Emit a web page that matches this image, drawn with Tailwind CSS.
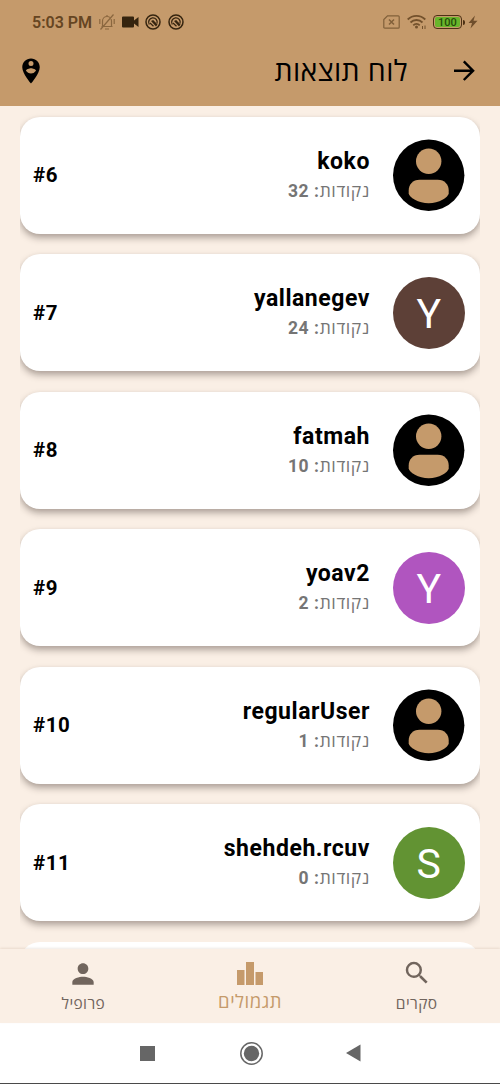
<!DOCTYPE html>
<html lang="he" dir="rtl">
<head>
<meta charset="utf-8">
<title>לוח תוצאות</title>
<script src="https://cdn.jsdelivr.net/npm/@tailwindcss/browser@4"></script>
</head>
<body class="w-[500px] h-[1084px] overflow-hidden flex flex-col bg-[#faefe5] font-['Roboto','Open_Sans',sans-serif] text-black">
  <header class="h-[106px] shrink-0 bg-[#c59a6b] flex flex-col">
    <div dir="ltr" class="h-[44px] pl-8 pr-[22px] flex items-center justify-between text-[#654522]">
      <div class="flex items-center">
        <span class="text-[16px] leading-none font-semibold w-[66px] pt-px whitespace-nowrap">5:03 PM</span>
        <svg class="w-[18px] h-[18px]" viewBox="0 0 18 18" fill="none" stroke="#8a673f" stroke-width="1.2"><path d="M3.5 13.5h11M4.500 13V8a4.500 4.500 0 0 1 9 0v5M7 16h4M9 2v1.500M1.800 6v5M16.200 6v5M2.500 16.500 15.500 1.500"/></svg>
        <svg class="ml-[6px] w-[17px] h-[12px]" viewBox="0 0 17 12" fill="#35240f"><path d="M0 1.500Q0 .5 1 .5H11Q12 .5 12 1.500V4.500L16.500 1V11L12 7.500V10.500Q12 11.500 11 11.500H1Q0 11.500 0 10.500Z"/></svg>
        <svg class="ml-[6px] w-[16px] h-[16px]" viewBox="0 0 16 16" fill="none" stroke="#35240f"><circle cx="8" cy="8" r="7" stroke-width="1.500"/><path d="M4.300 10.500A4.300 4.300 0 1 1 12 9.500" stroke-width="1.300"/><path d="M6 7 8.200 6 12.500 10.500 11 12.500Z" fill="#35240f" stroke="none"/><path d="M5 9 8.500 12.300" stroke-width="1.200"/></svg>
        <svg class="ml-[7px] w-[16px] h-[16px]" viewBox="0 0 16 16" fill="none" stroke="#35240f"><circle cx="8" cy="8" r="7" stroke-width="1.500"/><path d="M4.300 10.500A4.300 4.300 0 1 1 12 9.500" stroke-width="1.300"/><path d="M6 7 8.200 6 12.500 10.500 11 12.500Z" fill="#35240f" stroke="none"/><path d="M5 9 8.500 12.300" stroke-width="1.200"/></svg>
      </div>
      <div class="flex items-center">
        <svg class="w-[17px] h-[14px]" viewBox="0 0 17 14" fill="none" stroke="#81603a" stroke-width="1.200"><path d="M4.500.8H15.200Q16.200.8 16.200 1.800V12.200Q16.200 13.200 15.200 13.200H1.800Q.8 13.200.8 12.200V4.500Z"/><path d="M6 4.500l5 5M11 4.500l-5 5" stroke-width="1.500"/></svg>
        <svg class="ml-[7px] w-[20px] h-[16px]" viewBox="0 0 20 16" fill="none" stroke="#73512c" stroke-width="1.800"><path d="M.7 5.500a12.500 12.500 0 0 1 17.600 0M3.500 8.500a8.500 8.500 0 0 1 12 0M6.300 11.300a4.500 4.500 0 0 1 6.400 0"/><circle cx="9.500" cy="13" r="1.500" fill="#73512c" stroke="none"/><path d="M15.500 12v3M18 11.500v3.500" stroke-width="1"/></svg>
        <div class="ml-[6px] w-[29px] h-[14px] rounded-[4px] border-[1.5px] border-[#4d3014] p-px flex">
          <div class="flex-1 rounded-[2px] bg-[#69b52b] flex items-center justify-center text-[11px] leading-none font-medium text-[#244b0a]">100</div>
        </div>
        <div class="ml-px w-[2px] h-[5px] rounded-r bg-[#4d3014]"></div>
        <svg class="ml-[3px] w-[10px] h-[14px]" viewBox="0 0 10 14" fill="#6f4e2c"><path d="M7 .5.500 8H4L2.500 13.500 9.500 5.800H5.500Z"/></svg>
      </div>
    </div>
    <div class="h-[53px] px-[18px] flex items-center">
      <svg class="size-[36px] -my-1 shrink-0" viewBox="0 0 36 36" fill="none" stroke="#000" stroke-width="2.400"><path d="M8 17.700h19M17.800 8.400 27.100 17.700 17.800 27"/></svg>
      <h1 class="mr-[38px] text-[28.500px] leading-none tracking-[0.400px] whitespace-nowrap font-['Open_Sans',sans-serif]">לוח תוצאות</h1>
      <svg class="mr-auto ml-[-2px] size-[30px]" viewBox="0 0 24 24"><path fill-rule="evenodd" d="M12 2C8.130 2 5 5.130 5 9c0 5.250 7 13 7 13s7-7.750 7-13c0-3.870-3.130-7-7-7zm0 2a2 2 0 1 1 0 4 2 2 0 0 1 0-4zm0 10c-1.670 0-3.140-.85-4-2.150.02-1.320 2.670-2.050 4-2.050s3.980.73 4 2.050A4.800 4.800 0 0 1 12 14z"/></svg>
    </div>
  </header>

  <main id="board" class="flex-1 min-h-0 mx-5 pt-[10.900px] overflow-hidden flex flex-col gap-[20.500px]"></main>

  <nav class="relative h-[74px] shrink-0 bg-[#faefe5] grid grid-cols-3 shadow-[0_-1px_2px_rgba(120,80,40,0.12)] font-['Open_Sans',sans-serif] text-[#71655d]">
    <div class="flex flex-col items-center pt-[9px]">
      <svg class="size-[30px]" viewBox="0 0 24 24" fill="currentColor"><path d="M15.500 14h-.79l-.28-.27A6.470 6.470 0 0 0 16 9.500 6.500 6.500 0 1 0 9.500 16c1.610 0 3.090-.59 4.230-1.570l.27.28v.79l5 4.990L20.490 19l-4.990-5zm-6 0C7.010 14 5 11.990 5 9.500S7.010 5 9.500 5 14 7.010 14 9.500 11.990 14 9.500 14z"/></svg>
      <span class="mt-[6px] text-[15.500px] leading-[18px] tracking-[0.400px]">סקרים</span>
    </div>
    <div class="flex flex-col items-center pt-[9px] text-[#c59a6b]">
      <svg class="w-[28px] h-[28px]" viewBox="0 0 28 28" fill="currentColor"><path d="M1 12h7.500v15H1zM10 4h8v23h-8zM19.500 14H27v13h-7.500z"/></svg>
      <span class="mt-[5px] text-[18.500px] leading-[20px] tracking-[0.500px]">תגמולים</span>
    </div>
    <div class="flex flex-col items-center pt-[10px]">
      <svg class="size-[32px] -my-px" viewBox="0 0 24 24" fill="currentColor"><path d="M12 12c2.210 0 4-1.790 4-4s-1.790-4-4-4-4 1.790-4 4 1.790 4 4 4zm0 2c-2.670 0-8 1.340-8 4v2h16v-2c0-2.660-5.330-4-8-4z"/></svg>
      <span class="mt-[5px] text-[15.500px] leading-[18px] tracking-[0.400px]">פרופיל</span>
    </div>
  </nav>

  <footer dir="ltr" class="h-[61px] shrink-0 bg-white border-b border-[#4a4a4a] flex items-center text-[#666]">
    <div class="ml-[140px] size-[15px] bg-current"></div>
    <svg class="ml-[85px] size-[23px]" viewBox="0 0 23 23"><circle cx="11.500" cy="11.500" r="10.700" fill="none" stroke="currentColor" stroke-width="1.500"/><circle cx="11.500" cy="11.500" r="7.700" fill="currentColor"/></svg>
    <svg class="ml-[83px] w-[15px] h-[18px]" viewBox="0 0 15 18" fill="currentColor"><path d="M0 9 14.500.5v17z"/></svg>
  </footer>

<script>
const players = [
  {rank: 6, name: 'koko', points: 32},
  {rank: 7, name: 'yallanegev', points: 24, letter: 'Y', color: '#5d4037'},
  {rank: 8, name: 'fatmah', points: 10},
  {rank: 9, name: 'yoav2', points: 2, letter: 'Y', color: '#b055bf'},
  {rank: 10, name: 'regularUser', points: 1},
  {rank: 11, name: 'shehdeh.rcuv', points: 0, letter: 'S', color: '#629333'},
  null
];
const person = `<svg class="size-[72px] shrink-0 -mt-px" viewBox="0 0 72 72"><circle cx="35.700" cy="36.300" r="35.700"/><g fill="#c59a6b" transform="translate(-.3 .3)"><circle cx="36" cy="22" r="12.700"/><path d="M27 40.500H45C52 40.500 56 45.500 56 51V54C56 58 46 64 36 64S16 58 16 54V51C16 45.500 20 40.500 27 40.500Z"/></g></svg>`;
document.getElementById('board').innerHTML = players.map(p => {
  if (!p) return `<div class="h-[117px] shrink-0 rounded-[20px] bg-white"></div>`;
  const avatar = p.letter
    ? `<div class="size-[71.500px] mr-[0.500px] shrink-0 rounded-full flex items-center justify-center text-white text-[41px] leading-none pt-[3px]" style="background:${p.color}">${p.letter}</div>`
    : person;
  return `<div class="h-[117px] shrink-0 rounded-[20px] bg-white shadow-[0_4px_7px_rgba(50,35,30,0.36),0_1px_4px_rgba(60,35,20,0.05)] flex items-center pr-[15px] pl-[13px]">
    ${avatar}
    <div class="mr-[23px] flex flex-col">
      <div class="pt-px text-[23px] leading-[30px] font-bold tracking-[0.550px]"><bdi>${p.name}</bdi></div>
      <div class="text-[17.500px] leading-[26px] pb-px tracking-[0.600px] text-[#757575] whitespace-nowrap"><span class="font-['Open_Sans',sans-serif]">נקודות</span><span class="font-bold">: ${p.points}</span></div>
    </div>
    <div dir="ltr" class="mr-auto text-[20.500px] font-bold tracking-[0.500px]">#${p.rank}</div>
  </div>`;
}).join('');
</script>
</body>
</html>
